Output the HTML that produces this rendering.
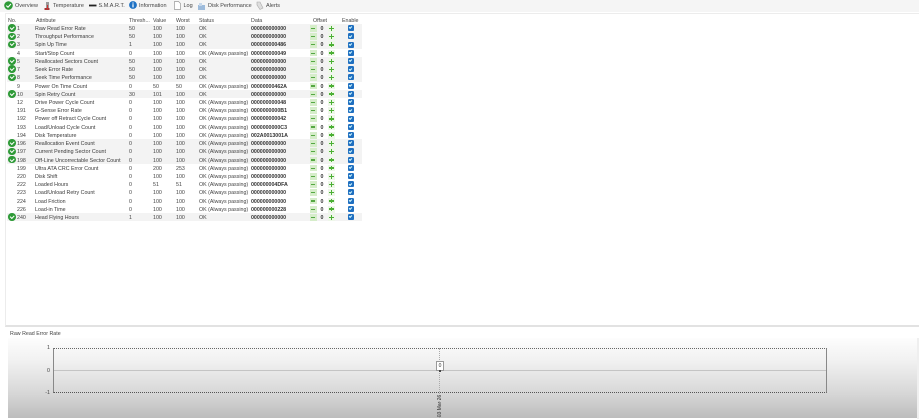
<!DOCTYPE html>
<html><head><meta charset="utf-8"><style>
html,body{margin:0;padding:0;width:919px;height:419px;overflow:hidden;background:#fff}
body{font-family:"Liberation Sans",sans-serif;font-size:5.3px;color:#333;position:relative;filter:blur(.25px)}
.a{position:absolute;white-space:nowrap}
#top{left:0;top:0;width:919px;height:12px;background:#f5f5f5}
#top span{position:absolute;top:3px;font-size:5.5px;line-height:7px;color:#444}
#top svg{position:absolute}
#frame{left:5px;top:13px;width:913px;height:311px;background:#fff;border:1px solid #ececec;border-bottom:2px solid #e2e2e2}
.h{top:18px;line-height:7px;color:#444}
.r{position:absolute;left:7px;width:355px;height:8.217px;line-height:10px}
.r.s{background:#f3f3f3}
.r span{position:absolute;top:0;white-space:nowrap;color:#444}
.r span:nth-child(1){left:10px}
.r span:nth-child(2){left:28px;color:#3a3a3a}
.r span:nth-child(3){left:122px}
.r span:nth-child(4){left:146px}
.r span:nth-child(5){left:169px}
.r span:nth-child(6){left:192px}
.r span:nth-child(7){left:244px;font-weight:bold;color:#333;letter-spacing:-.02px}
.r span:nth-child(8){left:313.5px;font-weight:bold;color:#333}
.r i{position:absolute;top:1px;width:6.6px;height:6.8px}
.m{left:303px;background:#d6edca}
.m::after{content:"";position:absolute;left:1.2px;top:2.9px;width:4.2px;height:1.2px;background:#55a843}
.p{left:321px;background:#eef7e9}
.p::after{content:"";position:absolute;left:1px;top:2.7px;width:4.6px;height:1.5px;background:#4cb035}
.p::before{content:"";position:absolute;left:2.6px;top:1.1px;width:1.5px;height:4.6px;background:#4cb035}
.e{left:340.5px;width:6px!important;height:6px!important;top:1.2px!important;background:#1f6fc0;border-radius:1.3px}
.e::after{content:"";position:absolute;left:1.6px;top:1.3px;width:2.4px;height:1.3px;border-left:.7px solid #dff;border-bottom:.7px solid #dff;transform:rotate(-45deg)}
.g{position:absolute;left:1px;top:.4px;width:7.6px;height:7.6px;border-radius:50%;background:#2e9a37}
.g::after{content:"";position:absolute;left:1.8px;top:1.7px;width:3.4px;height:1.7px;border-left:1px solid #fff;border-bottom:1px solid #fff;transform:rotate(-45deg)}
#tab{left:8px;top:329px;width:52px;height:9px;background:#fff;font-size:5.3px;line-height:11px;text-indent:2px;color:#444}
#panel{left:8px;top:338px;width:909px;height:80px;background:linear-gradient(#fdfdfd 0%,#f0f0f0 30%,#d6d6d6 70%,#bcbcbc 100%)}
#side{left:917px;top:338px;width:2px;height:81px;background:#efefef}
#plot{left:53px;top:348px;width:774px;height:45px;border-top:1px dotted #666;border-bottom:1px dotted #555;border-left:1px solid #888;border-right:1px solid #888;box-sizing:border-box}
#mid{left:53px;top:370px;width:774px;height:1px;background:#c4c4c4}
#vl{left:439px;top:348px;width:0;height:70px;border-left:1px dotted #aaa}
#tip{left:436px;top:361px;width:6px;height:8px;background:#fff;border:1px solid #999;font-size:5px;line-height:8px;text-align:center;color:#333}
#dot{left:438.5px;top:370px;width:2px;height:2px;background:#444}
.y{font-size:5.3px;color:#444;line-height:6px;text-align:right;width:14px;left:36px}
#date{left:439.5px;top:405.5px;transform:translate(-50%,-50%) rotate(-90deg);font-size:5px;color:#333}
</style></head><body>
<div class="a" id="top">
<svg style="left:4px;top:1px" width="9" height="9" viewBox="0 0 9 9"><circle cx="4.5" cy="4.5" r="4.3" fill="#2e9a37"/><path d="M2.3 4.6L4 6.2L6.9 3" stroke="#fff" stroke-width="1.1" fill="none"/></svg>
<span style="left:15px">Overview</span>
<svg style="left:44px;top:1.5px" width="6" height="8" viewBox="0 0 6 8"><rect x="2" y="0" width="3" height="8" fill="#999"/><rect x="0.5" y="6" width="5" height="2" fill="#a33"/><rect x="3" y="3" width="1" height="4" fill="#c33"/></svg>
<span style="left:53px">Temperature</span>
<svg style="left:89px;top:3.5px" width="8" height="3" viewBox="0 0 8 3"><rect width="7.5" height="1.8" y=".6" fill="#222"/></svg>
<span style="left:98.5px">S.M.A.R.T.</span>
<svg style="left:129px;top:.8px" width="8" height="8" viewBox="0 0 8 8"><circle cx="4" cy="4" r="3.9" fill="#1f72c4"/><rect x="3.4" y="3.2" width="1.2" height="3.2" fill="#fff"/><rect x="3.4" y="1.5" width="1.2" height="1.1" fill="#fff"/></svg>
<span style="left:139px">Information</span>
<svg style="left:174px;top:.5px" width="7" height="9" viewBox="0 0 7 9"><path d="M.5.5H4.5L6.5 2.5V8.5H.5Z" fill="#fff" stroke="#999" stroke-width=".7"/></svg>
<span style="left:183.5px">Log</span>
<svg style="left:198px;top:1.5px" width="7" height="8" viewBox="0 0 7 8"><rect y="3" width="7" height="5" fill="#9dbbdb"/><rect x="1" y="1" width="3" height="3" fill="#c7d8ea"/></svg>
<span style="left:208px">Disk Performance</span>
<svg style="left:256px;top:.5px" width="8" height="9" viewBox="0 0 8 9"><path d="M1 1L4 1L7 7L4 8.5L1 4Z" fill="#ddd" stroke="#aaa" stroke-width=".6"/></svg>
<span style="left:266px">Alerts</span>
</div>
<div class="a" id="frame"></div>

<div class="a h" style="left:8px">No.</div>
<div class="a h" style="left:36px">Attribute</div>
<div class="a h" style="left:129px">Thresh...</div>
<div class="a h" style="left:153px">Value</div>
<div class="a h" style="left:176px">Worst</div>
<div class="a h" style="left:199px">Status</div>
<div class="a h" style="left:251px">Data</div>
<div class="a h" style="left:313px">Offset</div>
<div class="a h" style="left:342px">Enable</div>

<div class="r s" style="top:24px"><span>1</span><span>Raw Read Error Rate</span><span>50</span><span>100</span><span>100</span><span>OK</span><span>000000000000</span><span>0</span><i class="m"></i><i class="p"></i><i class="e"></i><b class="g"></b></div>
<div class="r s" style="top:32.2px"><span>2</span><span>Throughput Performance</span><span>50</span><span>100</span><span>100</span><span>OK</span><span>000000000000</span><span>0</span><i class="m"></i><i class="p"></i><i class="e"></i><b class="g"></b></div>
<div class="r s" style="top:40.4px"><span>3</span><span>Spin Up Time</span><span>1</span><span>100</span><span>100</span><span>OK</span><span>000000000486</span><span>0</span><i class="m"></i><i class="p"></i><i class="e"></i><b class="g"></b></div>
<div class="r" style="top:48.7px"><span>4</span><span>Start/Stop Count</span><span>0</span><span>100</span><span>100</span><span>OK (Always passing)</span><span>000000000049</span><span>0</span><i class="m"></i><i class="p"></i><i class="e"></i></div>
<div class="r s" style="top:56.9px"><span>5</span><span>Reallocated Sectors Count</span><span>50</span><span>100</span><span>100</span><span>OK</span><span>000000000000</span><span>0</span><i class="m"></i><i class="p"></i><i class="e"></i><b class="g"></b></div>
<div class="r s" style="top:65.1px"><span>7</span><span>Seek Error Rate</span><span>50</span><span>100</span><span>100</span><span>OK</span><span>000000000000</span><span>0</span><i class="m"></i><i class="p"></i><i class="e"></i><b class="g"></b></div>
<div class="r s" style="top:73.3px"><span>8</span><span>Seek Time Performance</span><span>50</span><span>100</span><span>100</span><span>OK</span><span>000000000000</span><span>0</span><i class="m"></i><i class="p"></i><i class="e"></i><b class="g"></b></div>
<div class="r" style="top:81.5px"><span>9</span><span>Power On Time Count</span><span>0</span><span>50</span><span>50</span><span>OK (Always passing)</span><span>00000000462A</span><span>0</span><i class="m"></i><i class="p"></i><i class="e"></i></div>
<div class="r s" style="top:89.7px"><span>10</span><span>Spin Retry Count</span><span>30</span><span>101</span><span>100</span><span>OK</span><span>000000000000</span><span>0</span><i class="m"></i><i class="p"></i><i class="e"></i><b class="g"></b></div>
<div class="r" style="top:98px"><span>12</span><span>Drive Power Cycle Count</span><span>0</span><span>100</span><span>100</span><span>OK (Always passing)</span><span>000000000048</span><span>0</span><i class="m"></i><i class="p"></i><i class="e"></i></div>
<div class="r" style="top:106.2px"><span>191</span><span>G-Sense Error Rate</span><span>0</span><span>100</span><span>100</span><span>OK (Always passing)</span><span>0000000000B1</span><span>0</span><i class="m"></i><i class="p"></i><i class="e"></i></div>
<div class="r" style="top:114.4px"><span>192</span><span>Power off Retract Cycle Count</span><span>0</span><span>100</span><span>100</span><span>OK (Always passing)</span><span>000000000042</span><span>0</span><i class="m"></i><i class="p"></i><i class="e"></i></div>
<div class="r" style="top:122.6px"><span>193</span><span>Load/Unload Cycle Count</span><span>0</span><span>100</span><span>100</span><span>OK (Always passing)</span><span>0000000000C3</span><span>0</span><i class="m"></i><i class="p"></i><i class="e"></i></div>
<div class="r" style="top:130.8px"><span>194</span><span>Disk Temperature</span><span>0</span><span>100</span><span>100</span><span>OK (Always passing)</span><span>002A0013001A</span><span>0</span><i class="m"></i><i class="p"></i><i class="e"></i></div>
<div class="r s" style="top:139px"><span>196</span><span>Reallocation Event Count</span><span>0</span><span>100</span><span>100</span><span>OK (Always passing)</span><span>000000000000</span><span>0</span><i class="m"></i><i class="p"></i><i class="e"></i><b class="g"></b></div>
<div class="r s" style="top:147.3px"><span>197</span><span>Current Pending Sector Count</span><span>0</span><span>100</span><span>100</span><span>OK (Always passing)</span><span>000000000000</span><span>0</span><i class="m"></i><i class="p"></i><i class="e"></i><b class="g"></b></div>
<div class="r s" style="top:155.5px"><span>198</span><span>Off-Line Uncorrectable Sector Count</span><span>0</span><span>100</span><span>100</span><span>OK (Always passing)</span><span>000000000000</span><span>0</span><i class="m"></i><i class="p"></i><i class="e"></i><b class="g"></b></div>
<div class="r" style="top:163.7px"><span>199</span><span>Ultra ATA CRC Error Count</span><span>0</span><span>200</span><span>253</span><span>OK (Always passing)</span><span>000000000000</span><span>0</span><i class="m"></i><i class="p"></i><i class="e"></i></div>
<div class="r" style="top:171.9px"><span>220</span><span>Disk Shift</span><span>0</span><span>100</span><span>100</span><span>OK (Always passing)</span><span>000000000000</span><span>0</span><i class="m"></i><i class="p"></i><i class="e"></i></div>
<div class="r" style="top:180.1px"><span>222</span><span>Loaded Hours</span><span>0</span><span>51</span><span>51</span><span>OK (Always passing)</span><span>000000004DFA</span><span>0</span><i class="m"></i><i class="p"></i><i class="e"></i></div>
<div class="r" style="top:188.3px"><span>223</span><span>Load/Unload Retry Count</span><span>0</span><span>100</span><span>100</span><span>OK (Always passing)</span><span>000000000000</span><span>0</span><i class="m"></i><i class="p"></i><i class="e"></i></div>
<div class="r" style="top:196.6px"><span>224</span><span>Load Friction</span><span>0</span><span>100</span><span>100</span><span>OK (Always passing)</span><span>000000000000</span><span>0</span><i class="m"></i><i class="p"></i><i class="e"></i></div>
<div class="r" style="top:204.8px"><span>226</span><span>Load-in Time</span><span>0</span><span>100</span><span>100</span><span>OK (Always passing)</span><span>000000000228</span><span>0</span><i class="m"></i><i class="p"></i><i class="e"></i></div>
<div class="r s" style="top:213px"><span>240</span><span>Head Flying Hours</span><span>1</span><span>100</span><span>100</span><span>OK</span><span>000000000000</span><span>0</span><i class="m"></i><i class="p"></i><i class="e"></i><b class="g"></b></div>

<div class="a" id="tab">Raw Read Error Rate</div>
<div class="a" id="panel"></div>
<div class="a" id="side"></div>
<div class="a" id="mid"></div>
<div class="a" id="plot"></div>
<div class="a" id="vl"></div>
<div class="a y" style="top:345px">1</div>
<div class="a y" style="top:368px">0</div>
<div class="a y" style="top:390px">-1</div>
<div class="a" id="tip">0</div>
<div class="a" id="dot"></div>
<div class="a" id="date">03 Mar 26</div>
</body></html>
